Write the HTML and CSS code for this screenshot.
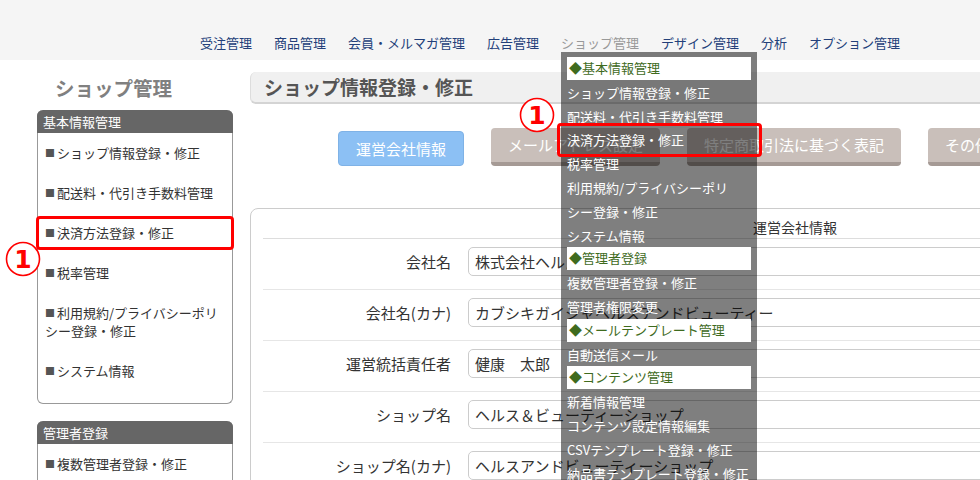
FILE: index.html
```html
<!DOCTYPE html>
<html>

<head>
    <title>ショップ管理 - ショップ情報登録・修正</title>
    <link rel="stylesheet" href="styles.css">
    <meta name="viewport" content="width=device-width, initial-scale=1">
</head>

<body>
    <div class="header">
        <ul class="gnav">
            <li>受注管理</li>
            <li>商品管理</li>
            <li>会員・メルマガ管理</li>
            <li>広告管理</li>
            <li class="current">ショップ管理
                <div class="dropdown">
                    <div class="dd-head">◆基本情報管理</div>
                    <div class="dd-item">ショップ情報登録・修正</div>
                    <div class="dd-item">配送料・代引き手数料管理</div>
                    <div class="dd-item marked">決済方法登録・修正</div>
                    <div class="dd-item">税率管理</div>
                    <div class="dd-item">利用規約/プライバシーポリ</div>
                    <div class="dd-item">シー登録・修正</div>
                    <div class="dd-item">システム情報</div>
                    <div class="dd-head">◆管理者登録</div>
                    <div class="dd-item">複数管理者登録・修正</div>
                    <div class="dd-item">管理者権限変更</div>
                    <div class="dd-head">◆メールテンプレート管理</div>
                    <div class="dd-item">自動送信メール</div>
                    <div class="dd-head">◆コンテンツ管理</div>
                    <div class="dd-item">新着情報管理</div>
                    <div class="dd-item">コンテンツ設定情報編集</div>
                    <div class="dd-item">CSVテンプレート登録・修正</div>
                    <div class="dd-item">納品書テンプレート登録・修正</div>
                </div>
            </li>
            <li>デザイン管理</li>
            <li>分析</li>
            <li>オプション管理</li>
        </ul>
    </div>

    <div class="page">
        <div class="sidebar">
            <h2 class="side-title">ショップ管理</h2>
            <div class="side-box">
                <div class="side-head">基本情報管理</div>
                <ul class="side-list">
                    <li><span class="sq">■</span>ショップ情報登録・修正</li>
                    <li><span class="sq">■</span>配送料・代引き手数料管理</li>
                    <li class="marked"><span class="sq">■</span>決済方法登録・修正</li>
                    <li><span class="sq">■</span>税率管理</li>
                    <li><span class="sq">■</span>利用規約/プライバシーポリシー登録・修正</li>
                    <li><span class="sq">■</span>システム情報</li>
                </ul>
            </div>
            <div class="side-box">
                <div class="side-head">管理者登録</div>
                <ul class="side-list">
                    <li><span class="sq">■</span>複数管理者登録・修正</li>
                    <li><span class="sq">■</span>管理者権限変更</li>
                </ul>
            </div>
            <svg class="num num-side" width="36" height="36" viewBox="0 0 36 36">
                <circle cx="18" cy="18" r="16.5" fill="#fff" stroke="#f00" stroke-width="1.6"/>
                <text x="18" y="27" text-anchor="middle">1</text>
            </svg>
        </div>

        <div class="main">
            <h1 class="page-title">ショップ情報登録・修正</h1>
            <div class="tabs">
                <div class="tab active">運営会社情報</div>
                <div class="tab">メールアドレス設定</div>
                <div class="tab">特定商取引法に基づく表記</div>
                <div class="tab">その他の設定</div>
            </div>
            <div class="panel">
                <div class="panel-head">運営会社情報</div>
                <div class="form-row">
                    <label>会社名</label>
                    <div class="field">株式会社ヘルスアンドビューティー</div>
                </div>
                <div class="form-row">
                    <label>会社名(カナ)</label>
                    <div class="field">カブシキガイシャヘルスアンドビューティー</div>
                </div>
                <div class="form-row">
                    <label>運営統括責任者</label>
                    <div class="field">健康　太郎</div>
                </div>
                <div class="form-row">
                    <label>ショップ名</label>
                    <div class="field">ヘルス＆ビューティーショップ</div>
                </div>
                <div class="form-row">
                    <label>ショップ名(カナ)</label>
                    <div class="field">ヘルスアンドビューティーショップ</div>
                </div>
            </div>
            <svg class="num num-main" width="36" height="36" viewBox="0 0 36 36">
                <circle cx="18" cy="18" r="16.5" fill="#fff" stroke="#f00" stroke-width="1.6"/>
                <text x="18" y="27" text-anchor="middle">1</text>
            </svg>
        </div>
    </div>
</body>

</html>
```

FILE: styles.css
```css
html,
body {
    overflow: hidden;
}

body {
    margin: 0;
    background: #fff;
    color: #333;
    font-family: "Noto Sans CJK JP", "Noto Sans", sans-serif;
}

ul {
    list-style: none;
    margin: 0;
    padding: 0;
}

.header {
    height: 60px;
    background: #f5f5f5;
}

.gnav {
    display: flex;
    gap: 22px;
    padding: 33px 0 0 200px;
    font-size: 13px;
    line-height: 20px;
    color: #23407a;
}

.gnav li {
    white-space: nowrap;
}

.gnav .current {
    position: relative;
    color: #999;
}

/* dropdown of the active menu */
.dropdown {
    position: absolute;
    top: 19px;
    left: 0;
    z-index: 10;
    width: 184px;
    height: 440px;
    padding: 5px 6px 0;
    background: rgba(0, 0, 0, 0.5);
}

.dd-head,
.dd-item {
    height: 23.8px;
    line-height: 23.8px;
    font-size: 13px;
    white-space: nowrap;
}

.dd-head {
    height: 22.8px;
    line-height: 22.8px;
    margin-bottom: 1px;
    padding-left: 2px;
    background: #fff;
    color: #3f6b1e;
}

.dd-item {
    color: #fff;
    position: relative;
}

.dd-item.marked::after {
    content: "";
    position: absolute;
    top: -5px;
    bottom: -5px;
    left: -10px;
    right: -11px;
    border: 3px solid #f00;
    border-radius: 4px;
}

.page {
    display: flex;
    align-items: flex-start;
}

.sidebar {
    position: relative;
    flex: none;
    width: 196px;
    margin-left: 37px;
    padding-top: 12px;
}

.side-title {
    margin: 0 0 6px;
    padding-left: 18px;
    font-size: 19.5px;
    line-height: 32px;
    font-weight: bold;
    color: #808080;
}

.side-box {
    border: 1px solid #999;
    border-top: none;
    border-radius: 6px;
    margin-bottom: 17px;
    padding-bottom: 12px;
}

.side-head {
    height: 23px;
    line-height: 23px;
    padding-left: 6px;
    margin: 0 -1px;
    border-radius: 6px 6px 0 0;
    background: #666;
    color: #fff;
    font-size: 13px;
}

.side-list li {
    position: relative;
    padding: 11px 6px 11px 7px;
    font-size: 13px;
    line-height: 18px;
    color: #333;
}

.sq {
    display: inline-block;
    width: 12px;
    font-size: 10px;
    color: #555;
    vertical-align: 1px;
}

.side-list li.marked::after {
    content: "";
    position: absolute;
    top: 3px;
    bottom: 3px;
    left: -2px;
    right: -2px;
    border: 3px solid #f00;
    border-radius: 4px;
}

.num {
    position: absolute;
}

.num text {
    font-family: "DejaVu Sans", sans-serif;
    font-weight: bold;
    font-size: 25px;
    fill: #f00;
}

.num-side {
    left: -32px;
    top: 181px;
}

.num-main {
    left: 269px;
    top: 37px;
}

.main {
    position: relative;
    flex: none;
    width: 1090px;
    margin-left: 17px;
    padding-top: 12px;
}

.page-title {
    margin: 0;
    height: 30px;
    line-height: 30px;
    padding-left: 13px;
    background: #f0f0f0;
    border-left: 1px solid #ddd;
    border-bottom: 2px solid #d4d4d4;
    border-radius: 6px 0 0 6px;
    font-size: 19px;
    font-weight: bold;
    color: #555;
}

.tabs {
    display: flex;
    align-items: flex-end;
    gap: 27px;
    margin-top: 24px;
    padding-left: 88px;
}

.tab {
    height: 34px;
    line-height: 34px;
    padding: 0 17px;
    background: #c9bfba;
    border-bottom: 4px solid #a59a95;
    border-radius: 4px;
    color: #fff;
    font-size: 15px;
    white-space: nowrap;
}

.tab.active {
    height: 33px;
    line-height: 33px;
    background: #8cc0f4;
    border: 1px solid #7fb2e6;
}

.panel {
    margin-top: 42px;
    padding: 0 12px;
    border: 1px solid #ccc;
    border-radius: 8px;
}

.panel-head {
    height: 22px;
    padding-top: 7px;
    line-height: 22px;
    text-align: center;
    font-size: 14px;
    border-bottom: 1px solid #ddd;
}

.form-row {
    display: flex;
    align-items: center;
    gap: 17px;
    padding: 8px 0 13px;
    border-bottom: 1px solid #e6e6e6;
}

.form-row label {
    flex: none;
    width: 188px;
    text-align: right;
    font-size: 15px;
    line-height: 20px;
}

.field {
    flex: 1;
    height: 27px;
    line-height: 27px;
    padding-left: 6px;
    border: 1px solid #ccc;
    border-radius: 5px;
    font-size: 15px;
    white-space: nowrap;
}
```
